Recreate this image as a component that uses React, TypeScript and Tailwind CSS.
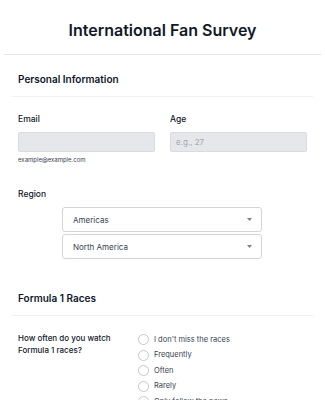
import React from 'react';

const options = ["I don't miss the races", 'Frequently', 'Often', 'Rarely', 'Only follow the news'];

const Caret = () => (
  <svg width="5" height="3" viewBox="0 0 5 3" className="text-[#7b818b]">
    <path d="M0 0h5L2.5 3z" fill="currentColor" />
  </svg>
);

const App = () => {
  return (
    <div className="w-[325px] h-[400px] overflow-hidden bg-white font-['Inter',sans-serif] text-[#0f172a]">
      <header className="mx-1 pt-4 pb-[10px] border-b border-[#e5e7eb]">
        <h1 className="text-center text-[16px] leading-[28px] font-semibold text-[#111827]">International Fan Survey</h1>
      </header>

      <section className="mx-3">
        <div className="pt-[15px] pb-2 px-[6px] border-b border-[#eef0f3]">
          <h2 className="text-[10px] leading-[18px] font-semibold">Personal Information</h2>
        </div>

        <div className="px-[6px] pt-[14px] grid grid-cols-2 gap-x-[15px]">
          <div>
            <label className="block text-[8.5px] leading-4 font-medium text-[#111827]">Email</label>
            <input
              className="mt-[5px] block w-full h-5 rounded-[2px] border border-[#d9dbe0] bg-[#e5e7eb] outline-none"
              type="text"
            />
            <span className="mt-[2px] block text-[6px] leading-3 text-[#374151]">example@example.com</span>
          </div>
          <div>
            <label className="block text-[8.5px] leading-4 font-medium text-[#111827]">Age</label>
            <input
              className="mt-[5px] block w-full h-5 rounded-[2px] border border-[#d9dbe0] bg-[#e5e7eb] px-[5px] text-[8px] placeholder:text-[#a3a8b0] outline-none"
              type="text"
              placeholder="e.g., 27"
            />
          </div>
        </div>

        <div className="px-[6px] pt-[20px]">
          <label className="block text-[8.5px] leading-4 font-medium text-[#111827]">Region</label>
          <div className="mt-[5px] ml-11 w-[200px] flex flex-col gap-[2px]">
            <div className="h-[25px] flex items-center justify-between rounded-[3px] border border-[#d1d5db] pl-[10px] pr-[9px] text-[8px] text-[#374151]">
              <span>Americas</span>
              <Caret />
            </div>
            <div className="h-[25px] flex items-center justify-between rounded-[3px] border border-[#d1d5db] pl-[10px] pr-[9px] text-[8px] text-[#374151]">
              <span>North America</span>
              <Caret />
            </div>
          </div>
        </div>

        <div className="mt-[30px] pb-2 px-[6px] border-b border-[#eef0f3]">
          <h2 className="text-[10px] leading-[18px] font-semibold">Formula 1 Races</h2>
        </div>

        <div className="px-[6px] pt-[16px] flex">
          <p className="w-[120px] text-[8px] leading-[12px] font-medium text-[#111827]">
            How often do you watch Formula 1 races?
          </p>
          <div className="flex flex-col gap-[4.5px] mt-[2px]">
            {options.map((o) => (
              <label key={o} className="flex items-center gap-[5px] h-[11px] text-[7.5px] text-[#374151]">
                <span className="w-[11px] h-[11px] shrink-0 rounded-full border border-[#c4c8ce] bg-white" />
                {o}
              </label>
            ))}
          </div>
        </div>
      </section>
    </div>
  );
};

export default App;
